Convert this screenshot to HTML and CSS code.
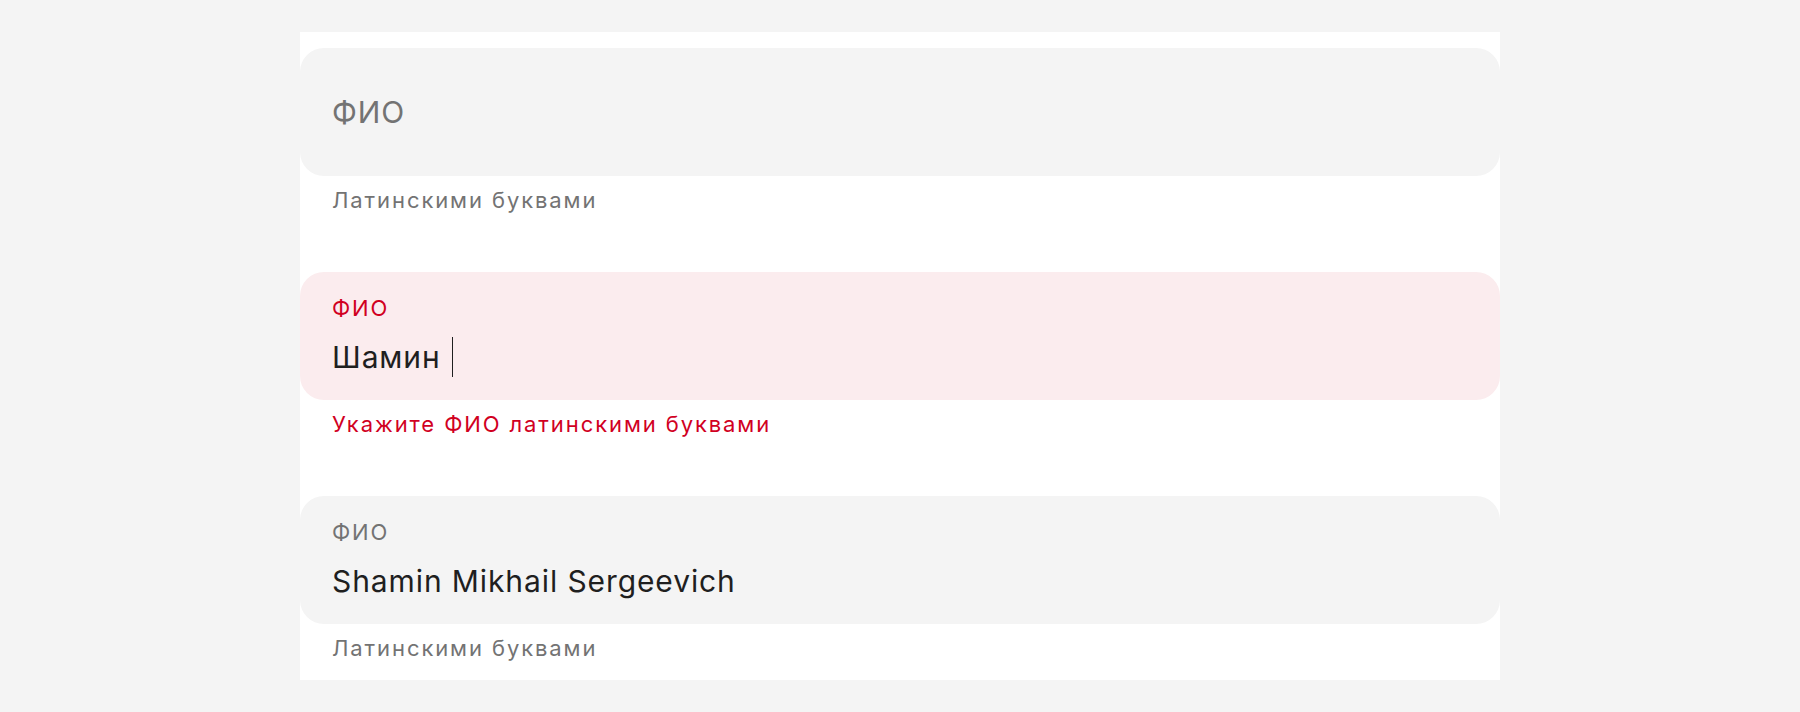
FILE: index.html
```html
<!DOCTYPE html>
<html lang="ru">
<head>
<meta charset="utf-8">
<title>ФИО</title>
<link rel="stylesheet" href="styles.css">
</head>
<body>
<main class="panel">
  <div class="group">
    <div class="field field--empty">
      <span class="placeholder">ФИО</span>
    </div>
    <div class="hint">Латинскими буквами</div>
  </div>
  <div class="group">
    <div class="field field--error">
      <span class="label">ФИО</span>
      <span class="value">Шамин<span class="caret"></span></span>
    </div>
    <div class="hint hint--error">Укажите ФИО латинскими буквами</div>
  </div>
  <div class="group">
    <div class="field">
      <span class="label">ФИО</span>
      <span class="value">Shamin Mikhail Sergeevich</span>
    </div>
    <div class="hint">Латинскими буквами</div>
  </div>
</main>
</body>
</html>
```

FILE: styles.css
```css
* { box-sizing: border-box; }
html, body { margin: 0; padding: 0; }
body {
  background: #f4f4f4;
  font-family: Inter, "Noto Sans", sans-serif;
  padding-top: 32px;
}
.panel {
  width: 1200px;
  margin: 0 auto;
  background: #ffffff;
  padding: 16px 0;
  display: flex;
  flex-direction: column;
  gap: 56px;
}
.field {
  height: 128px;
  border-radius: 24px;
  background: #f4f4f4;
  padding: 20px 32px 0;
  display: flex;
  flex-direction: column;
}
.field--empty {
  padding-top: 0;
  justify-content: center;
}
.field--error { background: #fbecee; }
.placeholder {
  font-size: 30px;
  line-height: 40px;
  color: #737373;
  letter-spacing: 0.9px;
}
.label {
  font-size: 22px;
  line-height: 32px;
  color: #737373;
  letter-spacing: 1.9px;
}
.field--error .label { color: #d1001f; }
.value {
  margin-top: 13px;
  font-size: 30px;
  line-height: 40px;
  color: #1f1f1f;
  letter-spacing: 0.9px;
  display: flex;
  align-items: stretch;
}
.caret {
  width: 1px;
  margin-left: 11px;
  background: #1f1f1f;
}
.hint {
  padding: 8px 32px 0;
  font-size: 22px;
  line-height: 32px;
  color: #737373;
  letter-spacing: 1.9px;
}
.hint--error { color: #d1001f; }
```
